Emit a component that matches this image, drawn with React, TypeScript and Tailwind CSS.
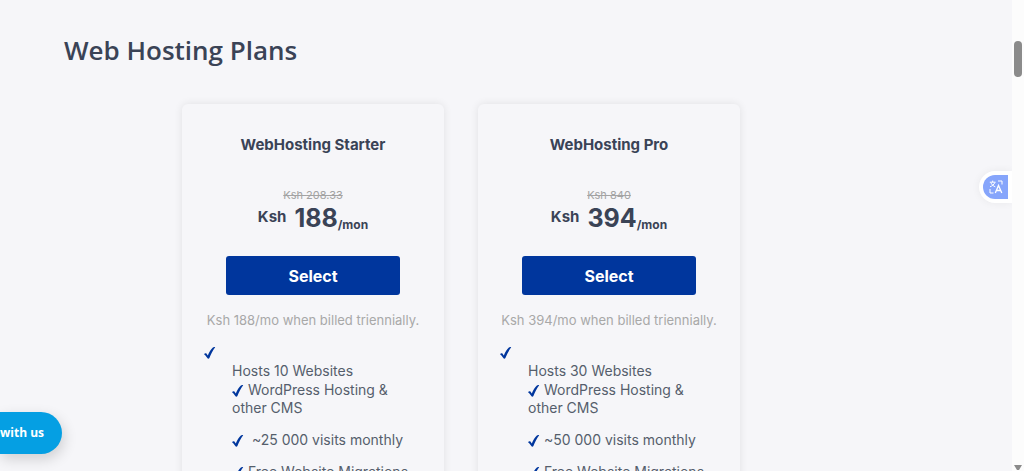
type Plan = {
  name: string
  oldPrice: string
  price: string
  websites: string
  visits: string
}

const plans: Plan[] = [
  { name: 'WebHosting Starter', oldPrice: '208.33', price: '188', websites: '10', visits: '\u00a0~25 000' },
  { name: 'WebHosting Pro', oldPrice: '840', price: '394', websites: '30', visits: '~50 000' },
]

function Check() {
  return (
    <svg viewBox="0 0 12 12" className="inline-block w-3 h-3 text-[#00369d]" fill="currentColor" aria-hidden="true">
      <path d="M0 7.2C.7 6.2 2 6 2.6 6.8L3.8 8.4C5.2 5.2 7 2.2 8.9.6C9.4 0 10.4-.1 11.2.3C8.7 3.6 6.9 7.2 5.4 11.1C5 12 3.8 12 3.3 11.1C2.4 9.5 1.4 8.1 0 7.2Z" />
    </svg>
  )
}

function PlanCard({ plan }: { plan: Plan }) {
  return (
    <article className="w-[262px] shrink-0 rounded-md px-[22px] pt-[31px] pb-8 shadow-[0_0_8px_rgba(0,0,0,0.09)]">
      <h2 className="text-center text-[15px] leading-5 font-bold">{plan.name}</h2>
      <p className="mt-8 text-center text-[11px] leading-4 text-[#a3a3a3] line-through">Ksh {plan.oldPrice}</p>
      <div className="flex items-start justify-center font-bold leading-7">
        <span className="mr-2 text-[15px]">Ksh</span>
        <span className="text-[25px] leading-[30px]">{plan.price}</span>
        <span className="pt-2 text-xs leading-7">/mon</span>
      </div>
      <div className="mt-[17px] flex justify-center">
        <button type="button" className="h-[39px] w-[174px] rounded-[3px] bg-[#00369d] text-base font-bold text-white hover:bg-[#002c80]">
          Select
        </button>
      </div>
      <p className="mt-4 text-center text-[13px] leading-[18px] whitespace-nowrap text-[#a8a8a8]">
        Ksh {plan.price}/mo when billed triennially.
      </p>
      <ul className="mt-[14px] text-sm leading-[18px] text-[#555e6c]">
        <li>
          <Check />
          <p className="py-px pl-7">Hosts {plan.websites} Websites</p>
        </li>
        <li className="pl-7"><Check /> WordPress Hosting &amp; other CMS</li>
        <li className="mt-[14px] pl-7 whitespace-nowrap"><Check /> {plan.visits} visits monthly</li>
        <li className="mt-[14px] pl-7 whitespace-nowrap"><Check /> Free Website Migrations</li>
      </ul>
    </article>
  )
}

function TranslateButton() {
  return (
    <button type="button" aria-label="Translate" className="absolute top-[171px] right-0 rounded-l-full bg-white p-1 shadow-[0_0_8px_rgba(0,0,0,0.06)]">
      <span className="flex h-6 w-[25px] items-center justify-center rounded-l-full bg-[#86a5fb]">
        <svg viewBox="0 0 14 14" className="w-[14px] h-[14px]" fill="none" stroke="white" strokeWidth="1">
          <path d="M.8 2.2H6.6M3.7.6V2.2M1.8 2.5C2.6 4.6 4.3 6 6.3 6.8M5.8 2.5C5 4.6 3.3 6 1 6.8" />
          <path d="M9 1H13V4.5M1 9V13H4.5" />
          <path d="M6.3 13L9.5 5.4L12.8 13M7.4 10.5H11.6" strokeWidth="1.3" />
        </svg>
      </span>
    </button>
  )
}

export default function App() {
  return (
    <div className="flex h-screen overflow-hidden bg-[#f6f6f9] font-['Inter','Liberation_Sans',sans-serif] text-[#3a4356]">
      <main className="relative flex-1 overflow-hidden">
        <section className="px-16 pt-8">
          <h1 className="font-['Open_Sans','Noto_Sans',sans-serif] text-[26px] leading-9 font-semibold">Web Hosting Plans</h1>
          <div className="mt-9 flex max-w-[794px] justify-center gap-[34px]">
            {plans.map((plan) => (
              <PlanCard key={plan.name} plan={plan} />
            ))}
          </div>
        </section>
        <TranslateButton />
        <button type="button" className="absolute bottom-[17px] left-0 h-[42px] rounded-r-full bg-[#059fe3] pr-[18px] font-['Open_Sans','Noto_Sans',sans-serif] text-xs font-bold text-white shadow-[2px_5px_14px_rgba(0,0,0,0.16)]">
          with us
        </button>
      </main>
      <div className="relative w-3 shrink-0 bg-[#fcfcfc]" aria-hidden="true">
        <div className="mx-auto mt-[41px] h-9 w-2 rounded-full bg-[#8b8b8b]" />
        <svg viewBox="0 0 8 6" className="absolute bottom-0 left-0.5 h-1.5 w-2" fill="#8b8b8b">
          <path d="M0 0H8L5 5H3Z" />
        </svg>
      </div>
    </div>
  )
}
